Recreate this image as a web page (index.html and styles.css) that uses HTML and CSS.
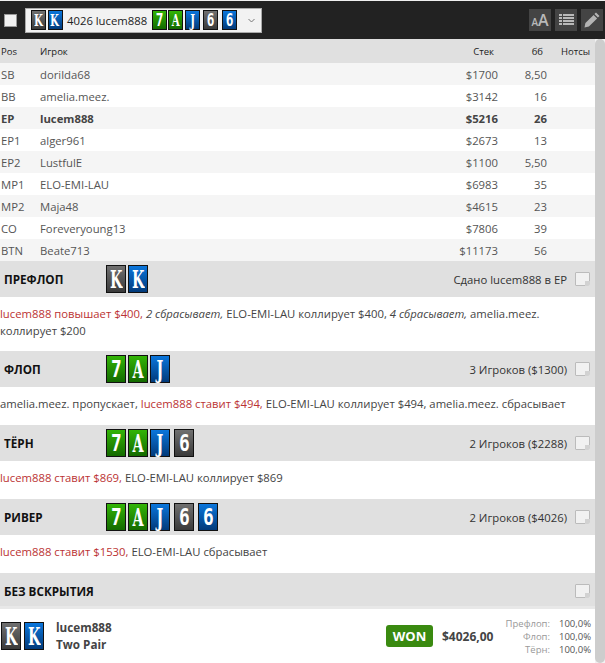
FILE: index.html
```html
<!DOCTYPE html>
<html lang="ru">
<head>
<meta charset="utf-8">
<title>Hand</title>
<link rel="stylesheet" href="styles.css">
</head>
<body>
<div class="topbar">
  <span class="check"></span>
  <div class="select">
    <span class="sm card gray"><b>K</b></span><span class="sm card blue"><b>K</b></span>
    <span class="select-text">4026 lucem888</span>
    <span class="sm card green num"><b>7</b></span><span class="sm card green"><b>A</b></span><span class="sm card blue"><b>J</b></span><span class="sm card gray num later"><b>6</b></span><span class="sm card blue num later"><b>6</b></span>
    <svg class="chev" width="7" height="5" viewBox="0 0 7 5"><path d="M0.5 1 L3.5 4 L6.5 1" fill="none" stroke="#777" stroke-width="1"/></svg>
  </div>
  <div class="tools">
    <span class="tool"><span class="aa-s">A</span><span class="aa-b">A</span></span>
    <span class="tool"><svg width="15" height="12" viewBox="0 0 15 12"><path fill="#b9b9b9" d="M0 0h3v2H0zM4 0h11v2H4zM0 3h3v2H0zM4 3h11v2H4zM0 6h3v2H0zM4 6h11v2H4zM0 9h3v2H0zM4 9h11v2H4z"/></svg></span>
    <span class="tool"><svg width="16" height="16" viewBox="0 0 16 16"><path fill="#b4b4b4" d="M12 0.5l3.5 3.5-1.6 1.6-3.5-3.5zM9.6 2.9l3.5 3.5-8.2 8.2-4.4 1 .9-4.5z"/></svg></span>
  </div>
</div>
<div class="main">
  <div class="content">
    <div class="row head"><span class="pos">Pos</span><span class="name">Игрок</span><span class="stack">Стек</span><span class="bb">бб</span><span class="notes">Нотсы</span></div>
    <div class="row alt"><span class="pos">SB</span><span class="name">dorilda68</span><span class="stack">$1700</span><span class="bb">8,50</span><span class="notes"></span></div>
    <div class="row"><span class="pos">BB</span><span class="name">amelia.meez.</span><span class="stack">$3142</span><span class="bb">16</span><span class="notes"></span></div>
    <div class="row alt hero"><span class="pos">EP</span><span class="name">lucem888</span><span class="stack">$5216</span><span class="bb">26</span><span class="notes"></span></div>
    <div class="row"><span class="pos">EP1</span><span class="name">alger961</span><span class="stack">$2673</span><span class="bb">13</span><span class="notes"></span></div>
    <div class="row alt"><span class="pos">EP2</span><span class="name">LustfulE</span><span class="stack">$1100</span><span class="bb">5,50</span><span class="notes"></span></div>
    <div class="row"><span class="pos">MP1</span><span class="name">ELO-EMI-LAU</span><span class="stack">$6983</span><span class="bb">35</span><span class="notes"></span></div>
    <div class="row alt"><span class="pos">MP2</span><span class="name">Maja48</span><span class="stack">$4615</span><span class="bb">23</span><span class="notes"></span></div>
    <div class="row"><span class="pos">CO</span><span class="name">Foreveryoung13</span><span class="stack">$7806</span><span class="bb">39</span><span class="notes"></span></div>
    <div class="row alt"><span class="pos">BTN</span><span class="name">Beate713</span><span class="stack">$11173</span><span class="bb">56</span><span class="notes"></span></div>

    <div class="street">
      <span class="street-name">ПРЕФЛОП</span>
      <span class="board"><span class="card gray"><b>K</b></span><span class="card blue"><b>K</b></span></span>
      <span class="street-info">Сдано lucem888 в EP</span><span class="note-ic"></span>
    </div>
    <p class="actions tall"><span class="hero-act">lucem888 повышает $400,</span> <em>2 сбрасывает,</em> ELO-EMI-LAU коллирует $400, <em>4 сбрасывает,</em> amelia.meez. коллирует $200</p>

    <div class="street">
      <span class="street-name">ФЛОП</span>
      <span class="board"><span class="card green num"><b>7</b></span><span class="card green"><b>A</b></span><span class="card blue"><b>J</b></span></span>
      <span class="street-info">3 Игроков ($1300)</span><span class="note-ic"></span>
    </div>
    <p class="actions">amelia.meez. пропускает, <span class="hero-act">lucem888 ставит $494,</span> ELO-EMI-LAU коллирует $494, amelia.meez. сбрасывает</p>

    <div class="street">
      <span class="street-name">ТЁРН</span>
      <span class="board"><span class="card green num"><b>7</b></span><span class="card green"><b>A</b></span><span class="card blue"><b>J</b></span><span class="card gray num later"><b>6</b></span></span>
      <span class="street-info">2 Игроков ($2288)</span><span class="note-ic"></span>
    </div>
    <p class="actions"><span class="hero-act">lucem888 ставит $869,</span> ELO-EMI-LAU коллирует $869</p>

    <div class="street">
      <span class="street-name">РИВЕР</span>
      <span class="board"><span class="card green num"><b>7</b></span><span class="card green"><b>A</b></span><span class="card blue"><b>J</b></span><span class="card gray num later"><b>6</b></span><span class="card blue num later"><b>6</b></span></span>
      <span class="street-info">2 Игроков ($4026)</span><span class="note-ic"></span>
    </div>
    <p class="actions"><span class="hero-act">lucem888 ставит $1530,</span> ELO-EMI-LAU сбрасывает</p>

    <div class="street last">
      <span class="street-name">БЕЗ ВСКРЫТИЯ</span>
      <span class="street-info"></span><span class="note-ic"></span>
    </div>
    <div class="result">
      <span class="res-cards"><span class="card gray"><b>K</b></span><span class="card blue"><b>K</b></span></span>
      <div class="res-name">lucem888<br>Two Pair</div>
      <span class="won">WON</span>
      <span class="amount">$4026,00</span>
      <div class="equity">
        <span class="eq-l">Префлоп:</span><span class="eq-v">100,0%</span>
        <span class="eq-l">Флоп:</span><span class="eq-v">100,0%</span>
        <span class="eq-l">Тёрн:</span><span class="eq-v">100,0%</span>
      </div>
    </div>
  </div>
  <div class="scroll"><div class="thumb"></div></div>
</div>
</body>
</html>
```
FILE: styles.css
```css
* { box-sizing: border-box; }
html, body { margin: 0; padding: 0; height: 663px; overflow: hidden; background: #fff; }
body { font-family: "Open Sans", "Noto Sans", sans-serif; font-size: 11.3px; color: #444; }

.topbar { height: 39px; background: #222; border-top: 1px solid #f0f0f0; display: flex; align-items: center; padding-left: 4px; }
.check { width: 13px; height: 13px; background: #f1f1f1; border: 1px solid #999; margin-right: 8px; }
.select { height: 25px; width: 237px; background: #f2f2f2; border: 1px solid #aaa; display: flex; align-items: center; padding-left: 5px; gap: 1.5px; color: #222; font-size: 11.3px; position: relative; }
.select-text { margin: 0 3px; }
.chev { position: absolute; right: 6px; top: 9px; }
.tools { margin-left: auto; display: flex; gap: 4px; margin-right: 2px; }
.tool { width: 22px; height: 22px; background: #444; display: flex; align-items: center; justify-content: center; color: #b9b9b9; font-weight: 600; }
.aa-s { font-size: 10px; margin-top: 3px; }
.aa-b { font-size: 16px; }

.card { display: inline-flex; align-items: center; justify-content: center; width: 20px; height: 28px; border: 1px solid #111; color: #fff; font-family: "DejaVu Serif", "Liberation Serif", serif; font-size: 21px; }
.card b { display: inline-block; font-weight: 700; transform: scale(0.68, 1.12); }
.card.num { font-family: "DejaVu Sans Mono", "Liberation Mono", monospace; }
.card.num b { transform: scale(0.85, 1.12); }
.card.later { margin-left: 2px; }
.card.sm { width: 15px; height: 20px; font-size: 15px; }
.gray { background: linear-gradient(#707070, #3a3a3a); }
.blue { background: linear-gradient(#0a76dc, #023a7a); }
.green { background: linear-gradient(#32b406, #146a00); }

.main { display: flex; height: 624px; }
.content { width: 595px; flex: none; }
.scroll { width: 10px; background: #f2f2f2; }
.thumb { height: 100%; background: #cdcdcd; border-radius: 5px; }

.row { display: flex; height: 22px; align-items: center; font-size: 11.3px; color: #555; background: #fff; }
.row.alt { background: #f5f5f5; }
.row.head { height: 24px; background: #e0e0e0; font-size: 9.5px; color: #222; }
.row.hero { font-weight: 700; color: #444; }
.pos { width: 40px; padding-left: 1px; flex: none; }
.name { flex: 1; }
.stack { width: 60px; text-align: right; flex: none; }
.bb { width: 49px; text-align: right; flex: none; }
.notes { width: 48px; text-align: right; padding-right: 5px; flex: none; }
.row.head .stack { padding-right: 4px; }
.row.head .bb { padding-right: 4px; }

.street { height: 36px; background: #e0e0e0; display: flex; align-items: center; padding: 0 5px 0 4px; }
.street.last { box-shadow: inset 0 -3px #e8e8e8; }
.street-name { width: 102px; flex: none; font-weight: 700; color: #111; font-size: 11.7px; }
.board { display: flex; gap: 2px; }
.street-info { margin-left: auto; color: #333; font-size: 11.3px; }
.note-ic { position: relative; width: 15px; height: 14px; margin: 0 0 0 8px; background: #f1f1f1; border: 1px solid #bbb; border-radius: 1px 1px 4px 1px; }
.note-ic::after { content: ""; position: absolute; right: -1px; bottom: -1px; width: 5px; height: 5px; background: #d2d2d2; border-radius: 0 0 3px 0; }

.actions { margin: 0; padding: 8px 1px 0 0; height: 38px; line-height: 17px; font-size: 11.3px; color: #444; }
.actions.tall { height: 54px; }
.hero-act { color: #b33; }

.result { height: 54px; display: flex; align-items: center; padding-left: 1px; position: relative; }
.res-cards { display: flex; gap: 3px; width: 55px; flex: none; }
.res-name { font-weight: 700; color: #444; font-size: 11.7px; line-height: 17px; flex: 1; }
.won { background: #3a8a10; color: #fff; font-weight: 700; font-size: 13px; border-radius: 3px; width: 47px; height: 22px; display: flex; align-items: center; justify-content: center; }
.amount { margin-left: 9px; font-weight: 700; color: #444; font-size: 12px; width: 52px; }
.equity { display: grid; grid-template-columns: 56px 41px; line-height: 13px; font-size: 9.5px; padding-right: 4px; }
.eq-l { text-align: right; color: #999; }
.eq-v { text-align: right; color: #555; }
```
